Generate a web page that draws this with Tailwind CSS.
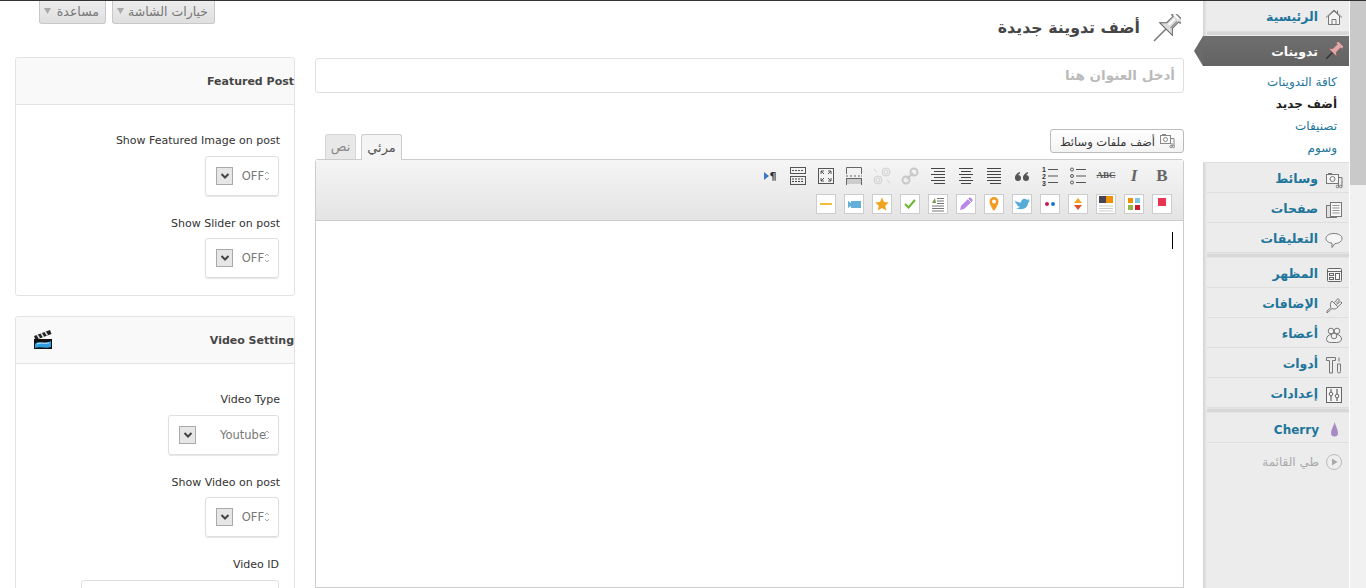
<!DOCTYPE html>
<html lang="ar">
<head>
<meta charset="utf-8">
<title>أضف تدوينة جديدة</title>
<script src="https://cdn.jsdelivr.net/npm/@tailwindcss/browser@4"></script>
</head>
<body class="bg-white overflow-hidden">
<div class="w-[1366px] h-[588px] overflow-hidden flex border-t border-[#333] font-['DejaVu_Sans',sans-serif] text-[11px] text-[#333]">

  <!-- left column -->
  <div class="w-[280px] ml-[15px] shrink-0 flex flex-col">
    <div class="flex gap-[6px] ml-[24px] h-[23px]">
      <div dir="rtl" class="w-[67px] h-[23px] pt-px pr-[6px] pl-[4px] flex items-center justify-between bg-gradient-to-b from-[#ededed] to-[#dfdfdf] border border-t-0 border-[#c8c8c8] rounded-b-[3px] text-[12.5px] text-[#777]"><span>مساعدة</span><svg class="-mt-[3px]" width="7" height="6" viewBox="0 0 7 6"><path d="M0 0h7L3.500 6Z" fill="#aaa"/></svg></div>
      <div dir="rtl" class="w-[103px] h-[23px] pt-px pr-[6px] pl-[4px] flex items-center justify-between bg-gradient-to-b from-[#ededed] to-[#dfdfdf] border border-t-0 border-[#c8c8c8] rounded-b-[3px] text-[12.5px] text-[#777]"><span>خيارات الشاشة</span><svg class="-mt-[3px]" width="7" height="6" viewBox="0 0 7 6"><path d="M0 0h7L3.500 6Z" fill="#aaa"/></svg></div>
    </div>

    <div class="mt-[33px] w-[280px] border border-[#e3e3e3] rounded-[3px] shrink-0">
      <div class="h-[47px] pt-[2px] bg-[#f9f9f9] border-b border-[#e3e3e3] rounded-t-[3px] flex items-center justify-end font-bold text-[#464646]">Featured Post</div>
      <div class="flex flex-col items-end pr-[14px] pt-[27px] pb-[17px]">
        <div class="h-4 leading-[18px] mb-2">Show Featured Image on post</div>
        <div class="w-[74px] h-[40px] mr-px border border-[#dfdfdf] rounded-[3px] shadow-[0_1px_1px_#e5e5e5] flex items-center justify-between pl-[10px] pr-[8px]">
          <div class="w-[17px] h-[18px] border border-[#aaa] bg-[#e6e6e6] flex items-center justify-center"><svg width="10" height="8" viewBox="0 0 10 8"><path d="M1.500 2 5 5.500 8.500 2" fill="none" stroke="#444" stroke-width="2"/></svg></div>
          <div class="flex items-center text-[11.5px] text-[#777]"><span class="pt-[2px]">OFF</span><svg width="6" height="12" viewBox="0 0 6 12"><path d="M1 4 3 2l2 2M1 8l2 2 2-2" fill="none" stroke="#aaa"/></svg></div>
        </div>
        <div class="h-4 leading-[18px] mt-[19px] mb-[7px]">Show Slider on post</div>
        <div class="w-[74px] h-[40px] mr-px border border-[#dfdfdf] rounded-[3px] shadow-[0_1px_1px_#e5e5e5] flex items-center justify-between pl-[10px] pr-[8px]">
          <div class="w-[17px] h-[18px] border border-[#aaa] bg-[#e6e6e6] flex items-center justify-center"><svg width="10" height="8" viewBox="0 0 10 8"><path d="M1.500 2 5 5.500 8.500 2" fill="none" stroke="#444" stroke-width="2"/></svg></div>
          <div class="flex items-center text-[11.5px] text-[#777]"><span class="pt-[2px]">OFF</span><svg width="6" height="12" viewBox="0 0 6 12"><path d="M1 4 3 2l2 2M1 8l2 2 2-2" fill="none" stroke="#aaa"/></svg></div>
        </div>
      </div>
    </div>

    <div class="mt-[20px] w-[280px] border border-[#e3e3e3] rounded-[3px] shrink-0">
      <div class="h-[47px] pt-[2px] bg-[#f9f9f9] border-b border-[#e3e3e3] rounded-t-[3px] flex items-center justify-between pl-[17px] font-bold text-[#464646]">
        <svg class="-mt-[3px]" width="20" height="21" viewBox="0 0 20 21"><path d="M1 7 17 1l1.500 4L2.500 11Z" fill="#222"/><path d="m4 5.500 2.500 4M8 4l2.500 4M12 2.500l2.500 4" stroke="#ddd" stroke-width="1.500"/><rect x="1" y="10" width="18" height="10" fill="#111"/><path d="M2 15c4-4 9 1 16-3v6c-6 2-10-1-16 1Z" fill="#2f9de0"/><path d="M4 15c4-2 8 0 12-1" stroke="#bfe6ff" fill="none"/></svg>
        <span>Video Setting</span>
      </div>
      <div class="flex flex-col items-end pr-[14px] pt-[27px]">
        <div class="h-4 leading-[18px] mb-2">Video Type</div>
        <div class="w-[111px] h-[40px] mr-px border border-[#dfdfdf] rounded-[3px] shadow-[0_1px_1px_#e5e5e5] flex items-center justify-between pl-[10px] pr-[8px]">
          <div class="w-[17px] h-[18px] border border-[#aaa] bg-[#e6e6e6] flex items-center justify-center"><svg width="10" height="8" viewBox="0 0 10 8"><path d="M1.500 2 5 5.500 8.500 2" fill="none" stroke="#444" stroke-width="2"/></svg></div>
          <div class="flex items-center text-[11.5px] text-[#777]"><span class="pt-[2px]">Youtube</span><svg class="-ml-[2px]" width="6" height="12" viewBox="0 0 6 12"><path d="M1 4 3 2l2 2M1 8l2 2 2-2" fill="none" stroke="#aaa"/></svg></div>
        </div>
        <div class="h-4 leading-[18px] mt-[19px] mb-[7px]">Show Video on post</div>
        <div class="w-[74px] h-[40px] mr-px border border-[#dfdfdf] rounded-[3px] shadow-[0_1px_1px_#e5e5e5] flex items-center justify-between pl-[10px] pr-[8px]">
          <div class="w-[17px] h-[18px] border border-[#aaa] bg-[#e6e6e6] flex items-center justify-center"><svg width="10" height="8" viewBox="0 0 10 8"><path d="M1.500 2 5 5.500 8.500 2" fill="none" stroke="#444" stroke-width="2"/></svg></div>
          <div class="flex items-center text-[11.5px] text-[#777]"><span class="pt-[2px]">OFF</span><svg width="6" height="12" viewBox="0 0 6 12"><path d="M1 4 3 2l2 2M1 8l2 2 2-2" fill="none" stroke="#aaa"/></svg></div>
        </div>
        <div class="h-4 leading-[18px] mt-[19px] mb-2 mr-px">Video ID</div>
        <div class="w-[198px] h-[40px] mr-px border border-[#dfdfdf] rounded-[3px] shrink-0"></div>
      </div>
    </div>
  </div>

  <!-- main column -->
  <div class="w-[869px] ml-[20px] shrink-0 flex flex-col pt-[13px]">
    <div dir="rtl" class="h-[30px] flex items-center gap-[11px] pr-[3px] mb-[14px]">
      <svg width="30" height="30" viewBox="0 0 30 30"><g transform="rotate(45 15 15)"><path d="M15 15v17" stroke="#777" stroke-width="1.500"/><path d="M9 -3h12v4h-2v9l5 5H6l5-5V1H9Z" fill="#dcdcdc" stroke="#666"/><path d="M14 2v8M11 -1h6" stroke="#fff" stroke-width="2"/><path d="M17.500 2v9" stroke="#999" stroke-width="1.500"/></g></svg>
      <h1 class="text-[15.8px] font-bold text-[#464646] leading-[30px] -mt-[2px]">أضف تدوينة جديدة</h1>
    </div>
    <div dir="rtl" class="h-[35px] border border-[#dfdfdf] rounded-[3px] flex items-center pr-[8px] text-[13.5px] font-bold text-[#bbb] shrink-0">أدخل العنوان هنا</div>

    <div class="mt-[36px] h-[31px] -mb-px flex items-end justify-between relative z-10 shrink-0">
      <div class="flex items-end gap-[5px] pl-[10px]">
        <div class="w-[31px] h-[25px] mb-px bg-[#e8e8e8] border border-b-0 border-[#d5d5d5] rounded-t-[3px] flex items-center justify-center text-[13px] text-[#888]" dir="rtl">نص</div>
        <div class="w-[41px] h-[26px] bg-[#f4f4f4] border border-b-0 border-[#ccc] rounded-t-[3px] flex items-center justify-center text-[13px] text-[#555]" dir="rtl">مرئي</div>
      </div>
      <div dir="rtl" class="w-[134px] h-[24px] mb-[7px] bg-gradient-to-b from-white to-[#f3f3f3] border border-[#bbb] rounded-[3px] flex items-center gap-[4px] pr-[8px] text-[11.5px] text-[#333]">
        <svg width="16" height="16" viewBox="0 0 16 16" fill="none" stroke="#888"><rect x="1.500" y="2.500" width="10" height="8"/><circle cx="6.500" cy="6.500" r="2"/><path d="M3 1.500h4M12 5.500h3v4M13 10v3M15 9.500v3.500"/><circle cx="12" cy="13.500" r="1.200"/><circle cx="14.500" cy="13.500" r="1.200"/></svg>
        <span class="pt-[3px]">أضف ملفات وسائط</span>
      </div>
    </div>

    <div class="flex-1 border border-[#ccc] rounded-t-[3px] flex flex-col">
      <div class="h-[61px] shrink-0 bg-gradient-to-b from-[#f5f5f5] to-[#e4e4e4] border-b border-[#ccc] pr-[11px] pt-[6px] flex flex-col gap-[8px]">
        <div dir="rtl" class="flex gap-[8px] h-[20px]">
          <div class="w-5 h-5 flex items-center justify-center font-['Liberation_Serif',serif] font-bold text-[17px] text-[#666]">B</div>
          <div class="w-5 h-5 flex items-center justify-center font-['Liberation_Serif',serif] font-bold italic text-[17px] text-[#666]">I</div>
          <div class="w-5 h-5 flex items-center justify-center font-['Liberation_Serif',serif] font-bold text-[9px] text-[#555] line-through" dir="ltr">ABC</div>
          <svg width="20" height="20" viewBox="0 0 20 20"><g fill="none" stroke="#555"><circle cx="4" cy="3.500" r="1.500"/><circle cx="4" cy="10" r="1.500"/><circle cx="4" cy="16.500" r="1.500"/><path d="M8 3.500h10M8 10h10M8 16.500h10"/></g></svg>
          <svg dir="ltr" width="20" height="20" viewBox="0 0 20 20"><path d="M8 3.500h10M8 10h10M8 16.500h10" stroke="#555"/><g font-family="Liberation Sans" font-weight="700" font-size="7" fill="#333"><text x="2" y="6" direction="ltr">1</text><text x="2" y="13" direction="ltr">2</text><text x="2" y="19.500" direction="ltr">3</text></g></svg>
          <svg width="20" height="20" viewBox="0 0 20 20" fill="#555"><circle cx="6" cy="12" r="3"/><path d="M3 12c0-3 2-5 5-6v1.500C6 8.500 5.500 10 5.500 12Z"/><circle cx="14" cy="12" r="3"/><path d="M11 12c0-3 2-5 5-6v1.500c-2 1-2.500 2.500-2.500 4.500Z"/></svg>
          <svg width="20" height="20" viewBox="0 0 20 20"><path d="M3 3.500h14M3 6.500h14M3 9.500h14M3 12.500h14M3 15.500h14M6 18.500h11" stroke="#444" transform="translate(0 -1)"/></svg>
          <svg width="20" height="20" viewBox="0 0 20 20"><path d="M3 2.500h14M5 5.500h10M3 8.500h14M5 11.500h10M3 14.500h14M5 17.500h10" stroke="#444"/></svg>
          <svg width="20" height="20" viewBox="0 0 20 20"><path d="M3 2.500h14M6 5.500h11M3 8.500h14M6 11.500h11M3 14.500h14M6 17.500h11" stroke="#444"/></svg>
          <svg width="20" height="20" viewBox="0 0 20 20"><g fill="none" stroke="#c8c8c8" stroke-width="2"><circle cx="6" cy="14" r="3.500"/><circle cx="14" cy="6" r="3.500"/><path d="m7 13 6-6"/></g></svg>
          <svg width="20" height="20" viewBox="0 0 20 20"><g fill="none" stroke="#d0d0d0"><circle cx="6" cy="14" r="4"/><circle cx="6" cy="14" r="2"/><circle cx="14" cy="6" r="4"/><circle cx="14" cy="6" r="2"/><path d="m2 3 3 3M15 14l3 3"/></g></svg>
          <svg width="20" height="20" viewBox="0 0 20 20"><path d="M2.500 8V1.500h15V8" fill="none" stroke="#666"/><path d="M2 10h2m2 0h2m2 0h2m2 0h2m1 0h1" stroke="#666"/><path d="M3 15.500h14" stroke="#ccc" stroke-width="5"/><path d="M2.500 19v-7M17.500 19v-7M2 12.500h16" fill="none" stroke="#666"/></svg>
          <svg width="20" height="20" viewBox="0 0 20 20"><rect x="2.500" y="2.500" width="15" height="15" fill="#f3f3f3" stroke="#555"/><path d="m5 5 3 3M5 5h3M5 5v3M15 5l-3 3M15 5h-3M15 5v3M5 15l3-3M5 15h3M5 15v-3M15 15l-3-3M15 15h-3M15 15v-3" stroke="#555"/></svg>
          <svg width="20" height="20" viewBox="0 0 20 20"><rect x="2.500" y="1.500" width="15" height="6" fill="none" stroke="#555"/><path d="M4 4.500h12" stroke="#555" stroke-dasharray="2 1"/><rect x="2.500" y="10.500" width="15" height="8" fill="none" stroke="#555"/><path d="M4 13h12M4 15.500h12" stroke="#444" stroke-dasharray="2 1"/></svg>
          <div dir="ltr" class="w-5 h-5 flex items-center justify-center gap-px"><svg width="5" height="8" viewBox="0 0 5 8"><path d="M0 0l5 4-5 4Z" fill="#3c78c8"/></svg><span class="font-bold text-[11px] leading-none text-[#333]">¶</span></div>
        </div>
        <div dir="rtl" class="flex gap-[8px] h-[20px]">
          <div class="w-5 h-5 bg-white border border-[#ccc] flex items-center justify-center"><svg width="18" height="18" viewBox="0 0 18 18"><rect x="5" y="3" width="8" height="8" fill="#e8354f"/></svg></div>
          <div class="w-5 h-5 bg-white border border-[#ccc] flex items-center justify-center"><svg width="18" height="18" viewBox="0 0 18 18"><rect x="3" y="3" width="5" height="5" fill="#f09000"/><rect x="10" y="3" width="5" height="5" fill="#7cc8e8"/><rect x="3" y="10" width="5" height="5" fill="#98b448"/><rect x="10" y="10" width="5" height="5" fill="#c81e32"/></svg></div>
          <div class="w-5 h-5 bg-white border border-[#ccc] flex items-center justify-center"><svg width="18" height="18" viewBox="0 0 18 18"><rect x="2" y="1" width="7" height="7" fill="#454555"/><rect x="9" y="1" width="7" height="7" fill="#f09000"/><path d="M2 11h14M2 13.500h14M2 16h14" stroke="#ccc"/></svg></div>
          <div class="w-5 h-5 bg-white border border-[#ccc] flex items-center justify-center"><svg width="18" height="18" viewBox="0 0 18 18"><path d="m9 3 4 5H5Z" fill="#f0a820"/><path d="M5 10h8l-4 5Z" fill="#e05030"/></svg></div>
          <div class="w-5 h-5 bg-white border border-[#ccc] flex items-center justify-center"><svg width="18" height="18" viewBox="0 0 18 18"><circle cx="6" cy="9" r="2" fill="#c8185a"/><circle cx="12" cy="9" r="2" fill="#1878c8"/></svg></div>
          <div class="w-5 h-5 bg-white border border-[#ccc] flex items-center justify-center"><svg width="18" height="18" viewBox="0 0 18 18"><path d="M1 5c3 2 5 2.500 7 2.500C8 4 12 2.500 14 5l2.500-1-1 2 1.500-.5C16 7 15.500 7.500 15 8c0 5-6 8-12 5 2 0 3-.5 4-1.500-2 0-3-1-3.500-2H5C3 9 2 7.500 2 6.500l1.500.5C2 6 1 5 1 5Z" fill="#55acd8"/></svg></div>
          <div class="w-5 h-5 bg-white border border-[#ccc] flex items-center justify-center"><svg width="18" height="18" viewBox="0 0 18 18"><path d="M9 2a4.500 4.500 0 0 0-4.500 4.500C4.500 10 9 16 9 16s4.500-6 4.500-9.500A4.500 4.500 0 0 0 9 2Z" fill="#f59a1e"/><circle cx="9" cy="6.500" r="2" fill="#fff"/></svg></div>
          <div class="w-5 h-5 bg-white border border-[#ccc] flex items-center justify-center"><svg width="18" height="18" viewBox="0 0 18 18"><path d="M3 15 4 11 12 3c1-1 2 0 3 1s1 1.500 0 2.500L7 14Z" fill="#b888e8"/><path d="m11 4 3 3" stroke="#fff"/></svg></div>
          <div class="w-5 h-5 bg-white border border-[#ccc] flex items-center justify-center"><svg width="18" height="18" viewBox="0 0 18 18"><path d="M3 8 6 3l1 5Z" fill="#7a9a50"/><path d="M8 3.500h7M8 6h7M8 8.500h7M3 11h12M3 13.500h12M3 16h12" stroke="#777"/></svg></div>
          <div class="w-5 h-5 bg-white border border-[#ccc] flex items-center justify-center"><svg width="18" height="18" viewBox="0 0 18 18"><path d="m4 9 3.500 3.500L14 5" fill="none" stroke="#6cb82c" stroke-width="2"/></svg></div>
          <div class="w-5 h-5 bg-white border border-[#ccc] flex items-center justify-center"><svg width="18" height="18" viewBox="0 0 18 18"><path d="m9 2.500 2 4.500 4.800.5-3.600 3.200 1 4.800L9 13l-4.200 2.500 1-4.800L2.200 7.500 7 7Z" fill="#f2a31e"/></svg></div>
          <div class="w-5 h-5 bg-white border border-[#ccc] flex items-center justify-center"><svg width="18" height="18" viewBox="0 0 18 18"><path d="M3 6 6 8V6h10v7H6v-2l-3 2Z" fill="#64b0d8"/></svg></div>
          <div class="w-5 h-5 bg-white border border-[#ccc] flex items-center justify-center"><svg width="18" height="18" viewBox="0 0 18 18"><path d="M3 9h12" stroke="#f2bc3c" stroke-width="2"/></svg></div>
        </div>
      </div>
      <div class="flex-1 bg-white flex justify-end pr-[10px] pt-[11px]"><div class="w-px h-[17px] bg-black"></div></div>
    </div>
  </div>

  <!-- admin menu -->
  <div dir="rtl" class="w-[146px] ml-[19px] shrink-0 bg-[#ececec] relative flex flex-col text-[#21759b] text-[12.5px] font-bold">
    <div class="absolute left-0 top-0 bottom-0 w-[4px] bg-gradient-to-r from-[#d2d2d2] to-[#ececec]"></div>

    <div class="h-[31px] shrink-0 flex items-center gap-[7px] pr-[6px] pt-[2px] border-b border-[#dedede]"><svg width="18" height="18" viewBox="0 0 18 18" fill="#f4f4f4" stroke="#777"><path d="M3.500 8v8.500h11V8L9 3Z"/><path d="M1 9.500 9 2l8 7.500M7 16.500v-5h4v5M12.500 2.500v3" fill="none"/></svg><span>الرئيسية</span></div>
    <div class="h-[4px] shrink-0 bg-[#d8d8d8] border-b border-[#eee]"></div>
    <div class="h-[30px] shrink-0 relative flex items-center gap-[7px] pr-[6px] pt-[3px] bg-gradient-to-b from-[#6f6f6f] to-[#626262] text-white">
      <svg class="-mt-[3px]" width="18" height="18" viewBox="0 0 18 18"><g transform="rotate(45 9 9)"><path d="M9 10v10" stroke="#333" stroke-width="1.500"/><path d="M5 -1h8v3h-1.500v6l3 3H3.500l3-3V2H5Z" fill="#e0a8a8" stroke="#8a5a5a" stroke-width=".7"/></g></svg>
      <span>تدوينات</span>
      <svg class="absolute -left-[9px] top-0" width="9" height="30" viewBox="0 0 9 30"><path d="M9 0v30L0 15Z" fill="#6a6a6a"/></svg>
    </div>
    <div class="h-[97px] shrink-0 relative bg-white border-b border-[#dedede] pt-[5px] pr-[12px] text-[12px] font-normal">
      <div class="h-[22px] leading-[22px]">كافة التدوينات</div>
      <div class="h-[22px] leading-[22px] font-bold text-[#222]">أضف جديد</div>
      <div class="h-[22px] leading-[22px]">تصنيفات</div>
      <div class="h-[22px] leading-[22px]">وسوم</div>
    </div>
    <div class="h-[30px] shrink-0 flex items-center gap-[7px] pr-[6px] pt-[4px] border-b border-[#dedede]"><svg width="18" height="18" viewBox="0 0 18 18" fill="none" stroke="#777"><rect x="1.500" y="3.500" width="12" height="9" fill="#f4f4f4"/><circle cx="7.500" cy="8" r="2.500"/><path d="M3 2.500h4M14 6.500h3v5M13.500 12v3.500M17 11v4.500"/><circle cx="12.500" cy="15.500" r="1.300"/><circle cx="15.800" cy="15.500" r="1.300"/></svg><span>وسائط</span></div>
    <div class="h-[30px] shrink-0 flex items-center gap-[7px] pr-[6px] pt-[4px] border-b border-[#dedede]"><svg width="18" height="18" viewBox="0 0 18 18" stroke="#777"><rect x="1.500" y="4.500" width="10" height="12" fill="#e0e0e0"/><rect x="5.500" y="1.500" width="11" height="14" fill="#f6f6f6"/><path d="M7.500 4.500h7M7.500 7h7M7.500 9.500h7M7.500 12h7" stroke="#999"/></svg><span>صفحات</span></div>
    <div class="h-[30px] shrink-0 flex items-center gap-[7px] pr-[6px] pt-[4px] border-b border-[#dedede]"><svg width="18" height="18" viewBox="0 0 18 18" fill="#f6f6f6" stroke="#777"><path d="M9 2.500c4.500 0 8 2 8 5s-3.500 5-7 5l-3 4v-4.300C3.500 11.800 1 10 1 7.500c0-3 3.500-5 8-5Z"/></svg><span>التعليقات</span></div>
    <div class="h-[5px] shrink-0 bg-[#d8d8d8] border-y border-[#e4e4e4]"></div>
    <div class="h-[30px] shrink-0 flex items-center gap-[7px] pr-[6px] pt-[4px] border-b border-[#dedede]"><svg width="18" height="18" viewBox="0 0 18 18" fill="none" stroke="#666"><rect x="2.500" y="2.500" width="14" height="13" rx="1" fill="#f4f4f4"/><path d="M3 5.500h13"/><rect x="4.500" y="7.500" width="4" height="2"/><rect x="4.500" y="11.500" width="4" height="2"/><rect x="10.500" y="7.500" width="4" height="6"/></svg><span>المظهر</span></div>
    <div class="h-[30px] shrink-0 flex items-center gap-[7px] pr-[6px] pt-[4px] border-b border-[#dedede]"><svg width="18" height="18" viewBox="0 0 18 18" fill="#f0f0f0" stroke="#777"><path d="M7 5 13 11c-1.500 2-4 2.500-6 1.500l-5 4.500v-2l4-3.500C5 10 5 7 7 5Z"/><path d="m9.500 6.500 3.500-4 1.500 1.500-3.500 3.500M11.500 8.500l4-3 1.500 1.500-4 3.500" /></svg><span>الإضافات</span></div>
    <div class="h-[30px] shrink-0 flex items-center gap-[7px] pr-[6px] pt-[4px] border-b border-[#dedede]"><svg width="18" height="18" viewBox="0 0 18 18" fill="#f2f2f2" stroke="#777"><circle cx="6" cy="5" r="2.800"/><circle cx="12" cy="5" r="2.800"/><path d="M1.500 13.500c0-3 2.500-5 4.500-5s3 1 3 1 1-1 3-1 4.500 2 4.500 4.500-3 3.500-5 3.500h-5c-2 0-5-.5-5-3Z"/><circle cx="9" cy="10" r="2.800"/></svg><span>أعضاء</span></div>
    <div class="h-[30px] shrink-0 flex items-center gap-[7px] pr-[6px] pt-[4px] border-b border-[#dedede]"><svg width="18" height="18" viewBox="0 0 18 18" fill="#ececec" stroke="#777"><path d="M1.500 1.500h9v3h-3V17h-3V4.500h-3Z"/><path d="M14 1.500v4M12.500 8h3v7.500a1.500 1.500 0 0 1-3 0Z"/></svg><span>أدوات</span></div>
    <div class="h-[30px] shrink-0 flex items-center gap-[7px] pr-[6px] pt-[4px] border-b border-[#dedede]"><svg width="18" height="18" viewBox="0 0 18 18" fill="none" stroke="#666"><rect x="1.500" y="1.500" width="15" height="15" fill="#f4f4f4"/><path d="M6 3v3M6 10v5M12 3v5M12 12v3" stroke="#444"/><circle cx="6" cy="8" r="1.800"/><circle cx="12" cy="10" r="1.800"/></svg><span>إعدادات</span></div>
    <div class="h-[5px] shrink-0 bg-[#d8d8d8] border-y border-[#e4e4e4]"></div>
    <div class="h-[30px] shrink-0 flex items-center gap-[6px] pr-[6px] pt-[4px] border-b border-[#dedede]"><svg width="18" height="18" viewBox="0 0 18 18"><path d="M9.500 1C9 5 6 8 6 12a3.500 3.500 0 0 0 7 0C13 8 10.500 5 9.500 1Z" fill="#a98bc4"/></svg><span class="text-[12px]">Cherry</span></div>
    <div class="h-[36px] shrink-0 flex items-center gap-[6px] pr-[6px] pt-[2px] text-[12px] font-normal text-[#aaa]"><svg width="18" height="18" viewBox="0 0 18 18"><circle cx="9" cy="9" r="7.500" fill="#eee" stroke="#bbb"/><path d="M7 5.500 12.500 9 7 12.500Z" fill="#aaa"/></svg><span>طي القائمة</span></div>
  </div>
  <div class="w-[16px] ml-px bg-[#f1f1f1] shrink-0"><div class="h-[184px] bg-[#c9c9c9]"></div></div>
</div>
</body>
</html>
